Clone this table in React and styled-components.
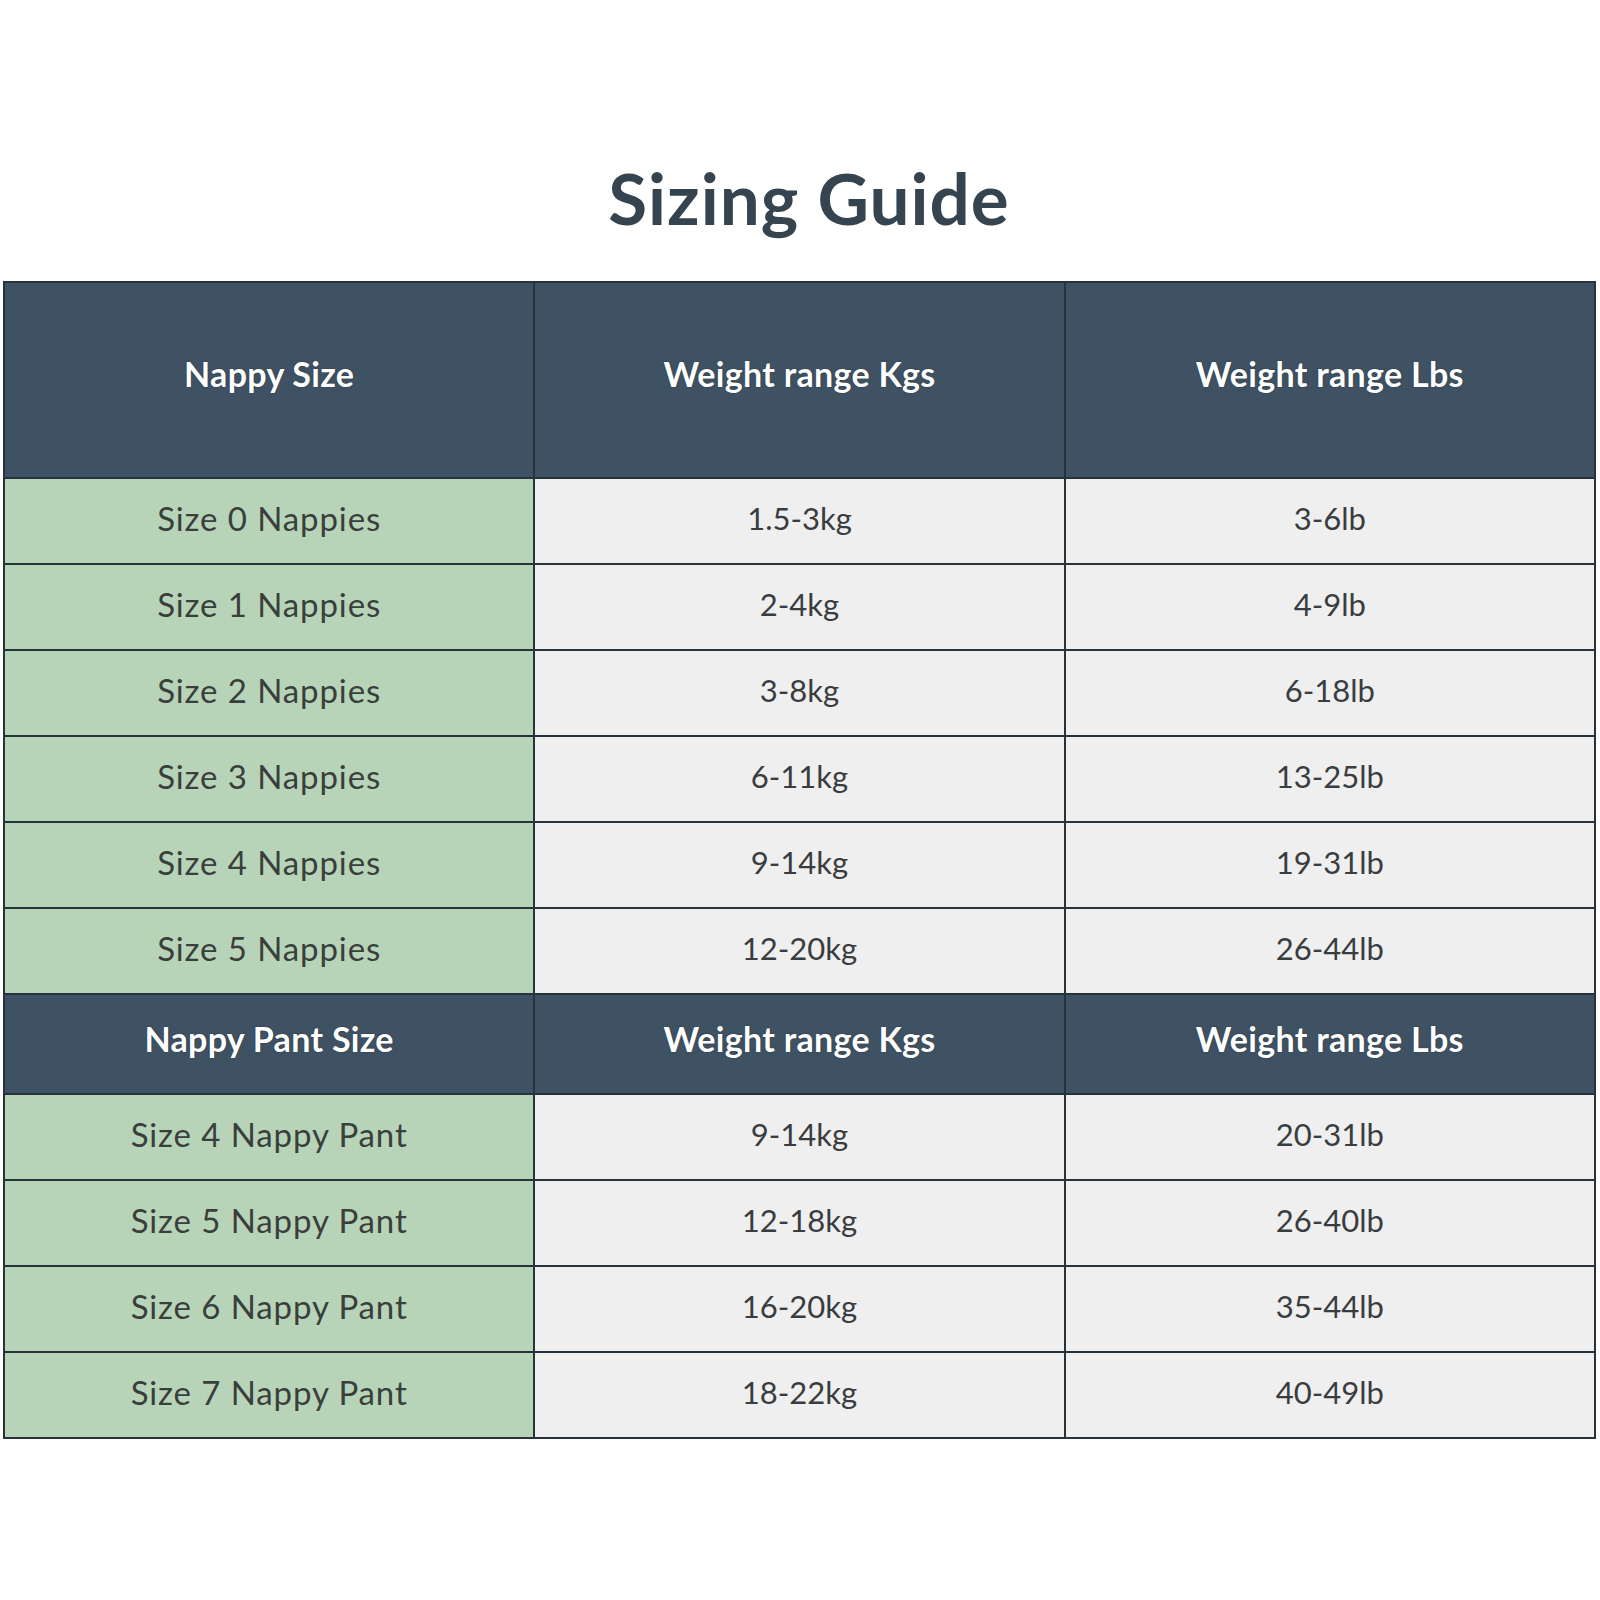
import React from "react";
import styled, { createGlobalStyle } from "styled-components";

const Global = createGlobalStyle`
  html, body { margin: 0; padding: 0; background: #ffffff; }
  body { font-family: "Lato", "Liberation Sans", sans-serif; }
`;

const Page = styled.div`
  width: 1600px;
  height: 1600px;
  background: #ffffff;
  display: flex;
  flex-direction: column;
`;

const TitleBar = styled.div`
  height: 281px;
  display: flex;
  align-items: flex-start;
  justify-content: center;
  box-sizing: border-box;
  padding-top: 155px;
  padding-left: 18px;
`;

const Title = styled.h1`
  margin: 0;
  font-family: "Lato", "Liberation Sans", sans-serif;
  font-weight: 700;
  font-size: 71px;
  line-height: 1.2;
  color: #36444f;
  letter-spacing: 1px;
`;

const Table = styled.div`
  margin-left: 3px;
  width: 1593px;
  box-sizing: border-box;
  display: grid;
  grid-template-columns: 1fr 1fr 1fr;
  gap: 2px;
  padding: 2px;
  background: #27323b;
`;

const Cell = styled.div`
  height: ${(p) => p.$h}px;
  display: flex;
  align-items: center;
  justify-content: center;
  box-sizing: border-box;
  background: #efefef;
  color: #3a3d3f;
  font-family: "Lato", "Liberation Sans", sans-serif;
  font-weight: 400;
  font-size: 31px;
  padding-bottom: 6px;
`;

const HeadCell = styled(Cell)`
  background: #3f5263;
  color: #ffffff;
  font-weight: 700;
  font-size: 34px;
  letter-spacing: 0.3px;
  text-shadow: 0 0 2px rgba(0, 0, 0, 0.35);
  padding-bottom: ${(p) => (p.$h > 150 ? "14px" : "12px")};
`;

const LabelCell = styled(Cell)`
  background: #b7d4b8;
  color: #3a3f3c;
  font-size: 33px;
  letter-spacing: 0.9px;
`;

const nappies = [
  ["Size 0 Nappies", "1.5-3kg", "3-6lb"],
  ["Size 1 Nappies", "2-4kg", "4-9lb"],
  ["Size 2 Nappies", "3-8kg", "6-18lb"],
  ["Size 3 Nappies", "6-11kg", "13-25lb"],
  ["Size 4 Nappies", "9-14kg", "19-31lb"],
  ["Size 5 Nappies", "12-20kg", "26-44lb"],
];

const pants = [
  ["Size 4 Nappy Pant", "9-14kg", "20-31lb"],
  ["Size 5 Nappy Pant", "12-18kg", "26-40lb"],
  ["Size 6 Nappy Pant", "16-20kg", "35-44lb"],
  ["Size 7 Nappy Pant", "18-22kg", "40-49lb"],
];

function Header({ first, h }) {
  return (
    <>
      <HeadCell $h={h}>{first}</HeadCell>
      <HeadCell $h={h}>Weight range Kgs</HeadCell>
      <HeadCell $h={h}>Weight range Lbs</HeadCell>
    </>
  );
}

function Rows({ rows }) {
  return rows.map((r) => (
    <React.Fragment key={r[0]}>
      <LabelCell $h={84}>{r[0]}</LabelCell>
      <Cell $h={84}>{r[1]}</Cell>
      <Cell $h={84}>{r[2]}</Cell>
    </React.Fragment>
  ));
}

export default function App() {
  return (
    <Page>
      <Global />
      <TitleBar>
        <Title>Sizing Guide</Title>
      </TitleBar>
      <Table>
        <Header first="Nappy Size" h={194} />
        <Rows rows={nappies} />
        <Header first="Nappy Pant Size" h={98} />
        <Rows rows={pants} />
      </Table>
    </Page>
  );
}
